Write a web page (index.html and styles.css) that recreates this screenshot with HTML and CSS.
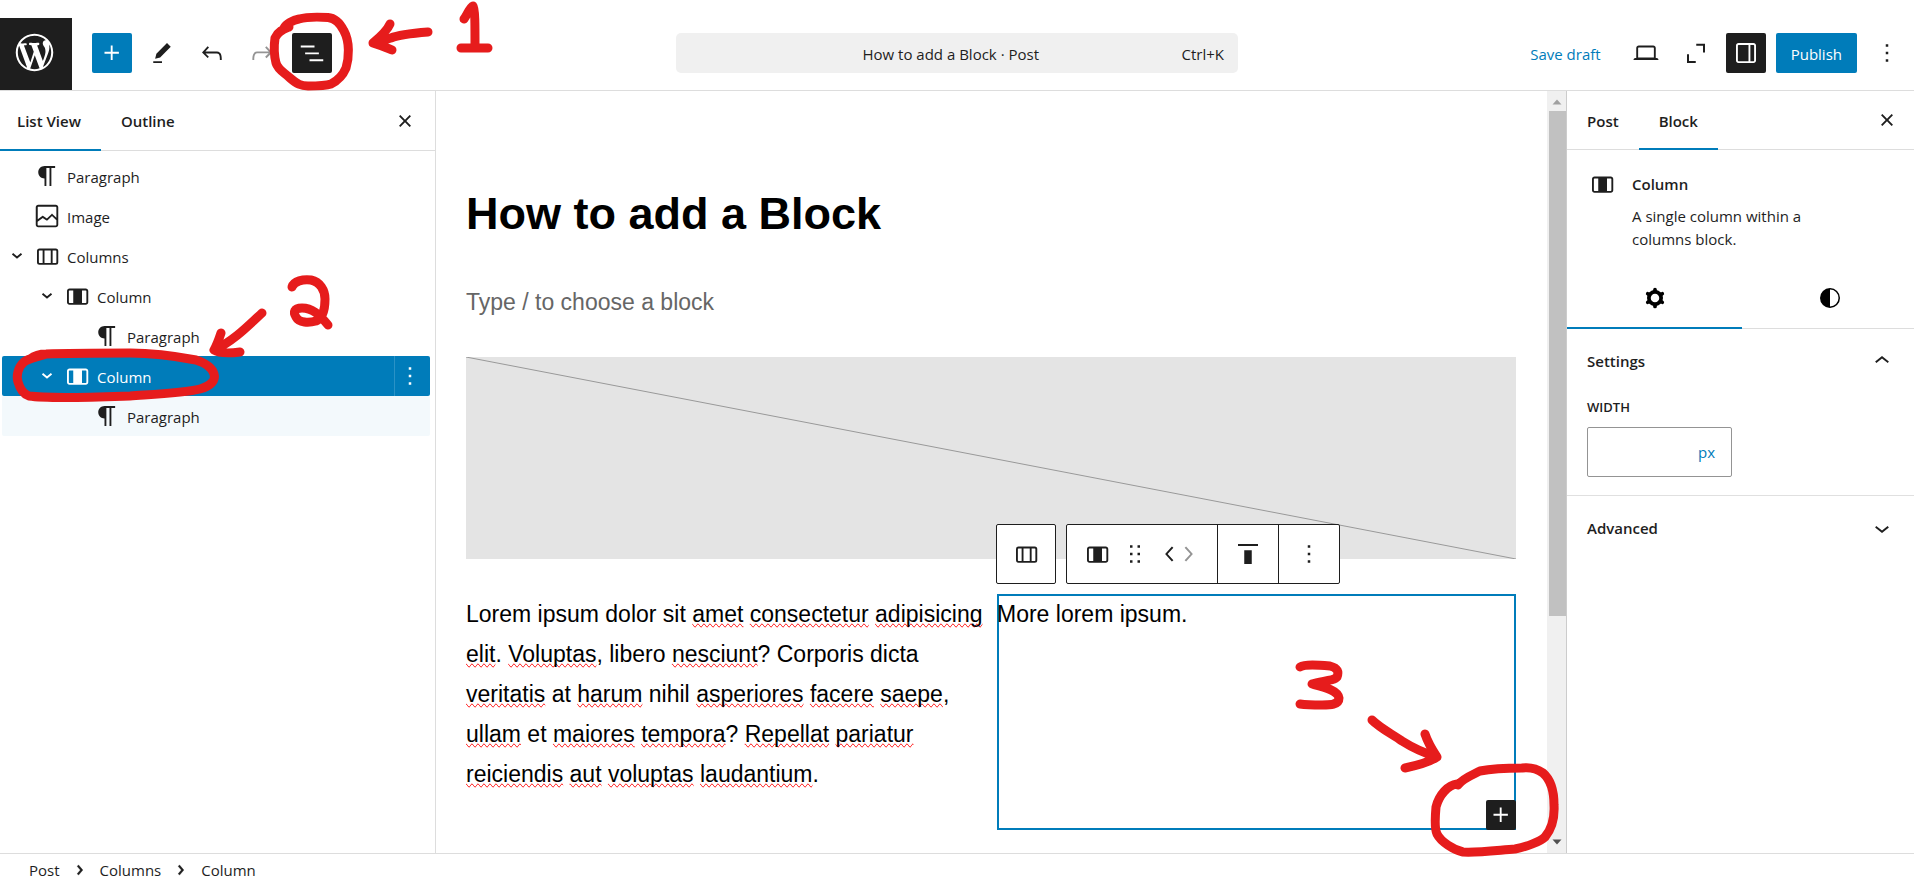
FILE: index.html
```html
<!DOCTYPE html>
<html lang="en">
<head>
<meta charset="utf-8">
<title>How to add a Block</title>
<link rel="stylesheet" href="styles.css">
</head>
<body>
<svg class="sprite" aria-hidden="true">
  <symbol id="i-plus" viewBox="0 0 24 24"><path d="M11 12.5V17.5H12.5V12.5H17.5V11H12.5V6H11V11H6V12.5H11Z"/></symbol>
  <symbol id="i-more" viewBox="0 0 24 24"><path d="M13 19h-2v-2h2v2zm0-6h-2v-2h2v2zm0-6h-2V5h2v2z"/></symbol>
  <symbol id="i-close" viewBox="0 0 24 24"><path d="M12 13.06l3.712 3.713 1.061-1.06L13.061 12l3.712-3.712-1.06-1.06L12 10.938 8.288 7.227l-1.061 1.06L10.939 12l-3.712 3.712 1.06 1.061L12 13.061z"/></symbol>
  <symbol id="i-para" viewBox="0 0 24 24"><path d="m9.99609 14v-.2251l.00391.0001v6.225h1.5v-14.5h2.5v14.5h1.5v-14.5h3v-1.5h-8.50391c-2.76142 0-5 2.23858-5 5 0 2.7614 2.23858 5 5 5z"/></symbol>
  <symbol id="i-image" viewBox="0 0 24 24"><path d="M19 3H5c-1.1 0-2 .9-2 2v14c0 1.1.9 2 2 2h14c1.1 0 2-.9 2-2V5c0-1.1-.9-2-2-2zM5 4.5h14c.3 0 .5.2.5.5v8.4l-3-2.9c-.3-.3-.8-.3-1 0L11.9 14 9 12c-.3-.2-.6-.2-.8 0l-3.6 2.6V5c-.1-.3.1-.5.4-.5zm14 15H5c-.3 0-.5-.2-.5-.5v-2.4l4.1-3 3 1.9c.3.2.7.2.9-.1L16 12l3.5 3.4V19c0 .3-.2.5-.5.5z"/></symbol>
  <symbol id="i-columns" viewBox="0 0 24 24"><path fill-rule="evenodd" d="M15 7.5h-5v10h5v-10Zm1.5 0v10H19a.5.5 0 0 0 .5-.5V8a.5.5 0 0 0-.5-.5h-2.5ZM6 7.5h2.5v10H6a.5.5 0 0 1-.5-.5V8a.5.5 0 0 1 .5-.5ZM6 6h13a2 2 0 0 1 2 2v9a2 2 0 0 1-2 2H6a2 2 0 0 1-2-2V8a2 2 0 0 1 2-2Z"/></symbol>
  <symbol id="i-column" viewBox="0 0 24 24"><path d="M19 6H6c-1.1 0-2 .9-2 2v9c0 1.1.9 2 2 2h13c1.1 0 2-.9 2-2V8c0-1.1-.9-2-2-2zM6 17.5c-.3 0-.5-.2-.5-.5V8c0-.3.2-.5.5-.5h3v10H6zm13.5-.5c0 .3-.2.5-.5.5h-3v-10h3c.3 0 .5.2.5.5v9z"/></symbol>
  <symbol id="i-caret" viewBox="0 0 24 24"><path fill="none" stroke="currentColor" stroke-width="1.5" d="M8.4 10.2 12 13.200l3.600-3"/></symbol>
  <symbol id="i-crumb" viewBox="0 0 24 24"><path d="M10.8622 8.04053L14.2805 12.0286L10.8622 16.0167L9.72327 15.0405L12.3049 12.0286L9.72327 9.01672L10.8622 8.04053Z" stroke="currentColor" stroke-width=".3"/></symbol>
</svg>

<header class="topbar">
  <a class="logo" href="#" aria-label="View Posts">
    <svg viewBox="-2 -2 24 24"><path d="M20 10c0-5.51-4.49-10-10-10C4.48 0 0 4.49 0 10c0 5.52 4.48 10 10 10 5.51 0 10-4.48 10-10zM7.78 15.37L4.37 6.22c.55-.02 1.17-.08 1.17-.08.5-.06.44-1.13-.06-1.11 0 0-1.45.11-2.37.11-.18 0-.37 0-.58-.01C4.12 2.69 6.87 1.11 10 1.11c2.33 0 4.45.87 6.05 2.34-.68-.11-1.65.39-1.65 1.58 0 .74.45 1.36.9 2.1.35.61.55 1.36.55 2.46 0 1.49-1.4 5-1.4 5l-3.03-8.37c.54-.02.82-.17.82-.17.5-.05.44-1.25-.06-1.22 0 0-1.44.12-2.38.12-.87 0-2.33-.12-2.33-.12-.5-.03-.56 1.2-.06 1.22l.92.08 1.26 3.41zM17.41 10c.24-.64.74-1.87.43-4.25.7 1.29 1.05 2.71 1.05 4.25 0 3.29-1.73 6.24-4.4 7.78.97-2.59 1.94-5.2 2.92-7.78zM6.1 18.09C3.12 16.65 1.11 13.53 1.11 10c0-1.3.23-2.48.72-3.59C3.25 10.3 4.67 14.2 6.1 18.09zm4.03-6.63l2.58 6.98c-.86.29-1.76.45-2.71.45-.79 0-1.57-.11-2.29-.33.81-2.38 1.62-4.74 2.42-7.1z"/></svg>
  </a>
  <div class="tools tools-left">
    <button class="btn primary" aria-label="Add block"><svg class="icon"><use href="#i-plus"/></svg></button>
    <button class="btn" aria-label="Tools"><svg class="icon" viewBox="0 0 24 24"><path d="m19 7-3-3-8.5 8.5-1 4 4-1L19 7Zm-7 11.5H5V20h7v-1.5Z"/></svg></button>
    <button class="btn" aria-label="Undo"><svg class="icon" viewBox="0 0 24 24"><path d="M18.3 11.7c-.6-.6-1.4-.9-2.3-.9H6.7l2.9-3.3-1.1-1-4.5 5L8.5 16l1-1-2.7-2.7H16c.5 0 .9.2 1.3.5 1 1 1 3.4 1 4.5v.3h1.5v-.2c0-1.5 0-4.3-1.5-5.7z"/></svg></button>
    <button class="btn muted" aria-label="Redo"><svg class="icon" viewBox="0 0 24 24"><path d="M15.6 6.5l-1.1 1 2.9 3.3H8c-.9 0-1.7.3-2.3.9-1.4 1.5-1.4 4.2-1.4 5.6v.2h1.5v-.3c0-1.1 0-3.5 1-4.5.3-.3.7-.5 1.3-.5h9.2L14.5 15l1.1 1.1 4.6-4.6-4.6-5z"/></svg></button>
    <button class="btn pressed" aria-label="Document Overview"><svg class="icon" viewBox="0 0 24 24"><path d="M3 6h11v1.500H3V6Zm3.500 5.500h11V13h-11v-1.500ZM21 17H10v1.500h11V17Z"/></svg></button>
  </div>
  <button class="command"><span class="command-title">How to add a Block · Post</span><span class="command-key">Ctrl+K</span></button>
  <div class="tools tools-right">
    <button class="btn link">Save draft</button>
    <button class="btn" aria-label="View"><svg class="icon" viewBox="0 0 24 24"><path d="M20.500 16h-.7V8c0-1.100-.9-2-2-2H6.200c-1.100 0-2 .9-2 2v8h-.7c-.8 0-1.500.7-1.500 1.500h20c0-.8-.7-1.500-1.500-1.500zM5.700 8c0-.3.2-.5.5-.5h11.600c.3 0 .5.2.5.5v7.600H5.700V8z"/></svg></button>
    <button class="btn" aria-label="Fullscreen"><svg class="icon" viewBox="0 0 24 24"><path d="M12.200 4.500h7V11.500h-1.600V6.100h-5.400zM4.800 13h1.600v5.400h5.400V20h-7z"/></svg></button>
    <button class="btn pressed" aria-label="Settings"><svg class="icon" viewBox="0 0 24 24"><path d="M18 4H6c-1.100 0-2 .9-2 2v12c0 1.100.9 2 2 2h12c1.100 0 2-.9 2-2V6c0-1.100-.9-2-2-2zm-4 14.500H6c-.3 0-.5-.2-.5-.5V6c0-.3.2-.5.5-.5h8v13zm4.500-.5c0 .3-.2.5-.5.5h-2.500v-13H18c.3 0 .5.2.5.5v12z"/></svg></button>
    <button class="btn primary publish">Publish</button>
    <button class="btn" aria-label="Options"><svg class="icon"><use href="#i-more"/></svg></button>
  </div>
</header>

<div class="workspace">
  <aside class="overview">
    <div class="tabs">
      <button class="tab active">List View</button>
      <button class="tab">Outline</button>
      <button class="close" aria-label="Close"><svg class="icon"><use href="#i-close"/></svg></button>
    </div>
    <ul class="tree">
      <li class="row"><span class="caret"></span><svg class="icon"><use href="#i-para"/></svg><a href="#">Paragraph</a></li>
      <li class="row"><span class="caret"></span><svg class="icon"><use href="#i-image"/></svg><a href="#">Image</a></li>
      <li class="row"><svg class="icon caret"><use href="#i-caret"/></svg><svg class="icon"><use href="#i-columns"/></svg><a href="#">Columns</a></li>
      <li class="row depth-1"><svg class="icon caret"><use href="#i-caret"/></svg><svg class="icon"><use href="#i-column"/></svg><a href="#">Column</a></li>
      <li class="row depth-2"><span class="caret"></span><svg class="icon"><use href="#i-para"/></svg><a href="#">Paragraph</a></li>
      <li class="row depth-1 selected"><svg class="icon caret"><use href="#i-caret"/></svg><svg class="icon"><use href="#i-column"/></svg><a href="#">Column</a><button class="row-menu" aria-label="Options"><svg class="icon"><use href="#i-more"/></svg></button></li>
      <li class="row depth-2 branch"><span class="caret"></span><svg class="icon"><use href="#i-para"/></svg><a href="#">Paragraph</a></li>
    </ul>
  </aside>

  <main class="canvas">
    <div class="document">
      <h1>How to add a Block</h1>
      <p class="prompt">Type / to choose a block</p>
      <svg class="placeholder" viewBox="0 0 100 100" preserveAspectRatio="none" role="img" aria-label="Image placeholder"><path d="M0 0 100 100" vector-effect="non-scaling-stroke"/></svg>
      <div class="columns">
        <p class="column">Lorem ipsum dolor sit <u>amet</u> <u>consectetur</u> <u>adipisicing</u> <u>elit</u>. <u>Voluptas</u>, libero <u>nesciunt</u>? Corporis dicta <u>veritatis</u> at <u>harum</u> nihil <u>asperiores</u> <u>facere</u> <u>saepe</u>, <u>ullam</u> et <u>maiores</u> <u>tempora</u>? <u>Repellat</u> <u>pariatur</u> <u>reiciendis</u> <u>aut</u> <u>voluptas</u> <u>laudantium</u>.</p>
        <div class="column current">
          <p>More lorem ipsum.</p>
          <div class="block-toolbar">
            <div class="group"><button aria-label="Select parent block"><svg class="icon"><use href="#i-columns"/></svg></button></div>
            <div class="group">
              <div class="segment">
                <button aria-label="Column"><svg class="icon"><use href="#i-column"/></svg></button>
                <button aria-label="Drag"><svg class="icon" viewBox="0 0 24 24"><path d="M8 7h2V5H8v2zm0 6h2v-2H8v2zm0 6h2v-2H8v2zm6-14v2h2V5h-2zm0 8h2v-2h-2v2zm0 6h2v-2h-2v2z"/></svg></button>
                <div class="movers">
                  <button aria-label="Move left"><svg class="icon mover" viewBox="4 0 15 24"><path d="M14.600 7l-1.200-1L8 12l5.400 6 1.200-1-4.600-5z"/></svg></button>
                  <button class="muted" aria-label="Move right"><svg class="icon mover" viewBox="5 0 15 24"><path d="M10.600 6L9.400 7l4.600 5-4.600 5 1.200 1 5.400-6z"/></svg></button>
                </div>
              </div>
              <button class="segment" aria-label="Align top"><svg class="icon" viewBox="0 0 24 24"><path d="M9 20h6V9H9v11zM4 4v1.500h16V4H4z"/></svg></button>
              <button class="segment" aria-label="Options"><svg class="icon"><use href="#i-more"/></svg></button>
            </div>
          </div>
          <button class="appender" aria-label="Add block"><svg class="icon"><use href="#i-plus"/></svg></button>
        </div>
      </div>
    </div>
    <div class="scrollbar" aria-hidden="true">
      <svg class="arrow up" viewBox="0 0 18 20"><path d="M4.500 13.500 9 8.500l4.500 5z"/></svg>
      <div class="thumb"></div>
      <svg class="arrow down" viewBox="0 0 18 20"><path d="M4.500 6.500h9L9 11.500z"/></svg>
    </div>
  </main>

  <aside class="inspector">
    <div class="tabs">
      <button class="tab">Post</button>
      <button class="tab active">Block</button>
      <button class="close" aria-label="Close Settings"><svg class="icon"><use href="#i-close"/></svg></button>
    </div>
    <section class="card">
      <svg class="icon"><use href="#i-column"/></svg>
      <div><h2>Column</h2><p>A single column within a columns block.</p></div>
    </section>
    <div class="modes">
      <button class="mode active" aria-label="Settings"><svg class="icon cog" viewBox="0 0 24 24"><circle cx="12" cy="12" r="4.900"/><path d="M12 6.500V5.300M12 17.500v1.200M16.800 9.200l1-.6M7.200 14.800l-1 .6M7.200 9.200l-1-.6M16.800 14.800l1 .6"/></svg></button>
      <button class="mode" aria-label="Styles"><svg class="icon" viewBox="0 0 24 24"><path d="M12 4a8 8 0 100 16 8 8 0 000-16zm0 1.200a6.800 6.800 0 010 13.600z"/></svg></button>
    </div>
    <section class="panel">
      <button class="panel-title">Settings<svg class="icon" viewBox="0 0 24 24"><path d="M6.500 12.400L12 8l5.500 4.400-.9 1.200L12 10l-4.500 3.600-1-1.200z"/></svg></button>
      <div class="field">
        <label for="width">Width</label>
        <div class="unit-input"><input id="width" type="text"><select aria-label="Unit"><option>px</option></select></div>
      </div>
    </section>
    <section class="panel">
      <button class="panel-title">Advanced<svg class="icon" viewBox="0 0 24 24"><path d="M17.500 11.600L12 16l-5.500-4.400.9-1.200L12 14l4.500-3.600 1 1.200z"/></svg></button>
    </section>
  </aside>
</div>

<footer class="crumbs">
  <a href="#">Post</a><svg class="icon"><use href="#i-crumb"/></svg><a href="#">Columns</a><svg class="icon"><use href="#i-crumb"/></svg><a href="#">Column</a>
</footer>

<svg class="marks" viewBox="0 0 1914 880" role="img" aria-label="Steps 1, 2 and 3 marked in red pen">
  <path d="M289 27C284 29 278 31 275 38C274 45 274 55 276 63C278 70 285 73 290 78C297 84 301 86 308 86C316 86 325 86 331 84C337 81 343 75 346 68C349 58 350 42 344 31C340 23 335 18 328 17.500C320 17 306 17 299 19C293 20 286 24 284 28"/>
  <path d="M428 32C415 33 398 35 391 38C384 40 378 42 373 43M390 24C387 31 379 38 373 43C379 45 388 48 392 50"/>
  <path d="M464 19C467 15 470 7 473 6C475 8 475 25 475 48M461 48H488"/>
  <path d="M46 354C38 357 29 358 24 362C18 367 16 376 18 382C20 389 23 394 29 396C50 399 100 397 130 396C160 394 185 393 200 389C211 386 216 380 214 374C212 367 205 363 196 360C175 356 155 353 130 353C100 353 70 353 46 354C39 354 34 356 30 359"/>
  <path d="M262 313C251 323 234 341 214 350M221 333C219 339 217 345 214 350C220 354 232 353 240 352"/>
  <path d="M292 287C294 281 303 279 311 280C320 282 325 290 325 299C325 308 323 318 316 321C309 323 299 323 296 317C293 312 294 308 302 308C312 308 319 314 328 325"/>
  <path d="M1300 667C1305 664 1318 665 1330 666C1338 668 1339 672 1337 677C1334 681 1320 681 1312 684C1324 687 1338 690 1339 698C1339 705 1330 705 1322 705C1315 705 1307 705 1300 704"/>
  <path d="M1372 720C1380 728 1392 734 1402 741C1413 748 1424 753 1437 757M1425 734C1428 743 1433 751 1437 757C1431 761 1419 765 1405 768"/>
  <path d="M1457 784C1448 785 1439 795 1436 807C1435 818 1435 830 1437 834C1441 842 1454 850 1463 852C1477 853 1500 850 1515 849C1525 847 1540 842 1545 837C1550 831 1555 822 1554 805C1554 793 1551 780 1543 773C1536 768 1529 767 1522 768C1510 768 1490 769 1480 771C1472 775 1462 779 1458 785"/>
</svg>
</body>
</html>
```
FILE: styles.css
```css
* { box-sizing: border-box; }

:root {
  --accent: #007cba;
  --ink: #1e1e1e;
  --line: #ddd;
}

body {
  margin: 0;
  height: 100vh;
  display: flex;
  flex-direction: column;
  position: relative;
  overflow: hidden;
  background: #fff;
  color: var(--ink);
  font: 15px/24px "Open Sans", "Noto Sans", sans-serif;
}

button, input, select { font: inherit; color: inherit; }

button {
  display: flex;
  align-items: center;
  justify-content: center;
  padding: 0;
  border: 0;
  background: none;
}

a { color: inherit; text-decoration: none; }
h1, h2, p, ul { margin: 0; padding: 0; }

.sprite { display: none; }
.icon { width: 30px; height: 30px; flex: none; fill: currentColor; }

/* Top bar */
.topbar {
  flex: none;
  display: flex;
  align-items: center;
  margin-top: 18px;
  height: 73px;
  border-bottom: 1px solid var(--line);
  padding-right: 7px;
}
.logo {
  align-self: stretch;
  width: 72px;
  padding: 12px;
  background: var(--ink);
  color: #fff;
}
.logo svg { width: 45px; height: 45px; fill: currentColor; }
.tools { display: flex; gap: 10px; flex: 1 1 0; padding-bottom: 2px; }
.tools-left { padding-left: 20px; }
.tools-right { justify-content: flex-end; }
.btn { width: 40px; height: 40px; border-radius: 2px; flex: none; }
.primary { background: var(--accent); color: #fff; }
.pressed { background: var(--ink); color: #fff; }
.muted { color: #949494; }
.link { width: auto; padding: 2px 15px 0; color: var(--accent); }
.publish { width: auto; padding: 2px 15px 0; font-weight: 500; }
.command {
  width: 562px;
  height: 40px;
  margin: 0 85px 2px 0;
  padding: 2px 14px 0 44px;
  border-radius: 5px;
  background: #f0f0f0;
}
.command-title { flex: 1; }

/* Shared tab strip */
.tabs {
  display: flex;
  height: 60px;
  border-bottom: 1px solid var(--line);
}
.tab { padding: 2px 20px 0; height: 60px; font-weight: 600; border-bottom: 2px solid transparent; }
.tab.active { border-bottom-color: var(--accent); }
.close { margin-left: auto; width: 30px; }

.workspace { flex: 1; display: flex; min-height: 0; }

/* List view */
.overview { width: 436px; flex: none; border-right: 1px solid var(--line); }
.overview .tab:first-child { padding-left: 17px; }
.overview .close { margin-right: 15px; }
.tree { list-style: none; padding: 5px 5px 0 2px; }
.row { display: flex; align-items: center; height: 40px; border-radius: 2px; }
.row .caret { width: 30px; }
.row a { flex: 1; padding: 2px 0 0 5px; }
.depth-1 { padding-left: 30px; }
.depth-2 { padding-left: 60px; }
.selected { background: var(--accent); color: #fff; }
.branch { background: #f3f9fc; }
.row-menu { justify-content: flex-start; width: 36px; height: 40px; border-left: 1px solid #2a92c6; }

/* Editor canvas */
.canvas {
  flex: 1;
  display: flex;
  min-width: 0;
  color: #000;
  font-family: "Liberation Sans", Arial, sans-serif;
  font-size: 23px;
  line-height: 40px;
}
.document { flex: 1; min-width: 0; padding: 90px 31px 0 30px; }
h1 { font-size: 45px; line-height: 66px; }
.prompt { margin-top: 35px; color: #666; }
.placeholder {
  display: block;
  width: 100%;
  height: 202px;
  margin-top: 35px;
  background: #e4e4e4;
  fill: none;
  stroke: #999;
}
.columns {
  display: grid;
  grid-template-columns: 1fr 1fr;
  gap: 12px;
  margin-top: 35px;
}
u { text-decoration: spelling-error; }
.current { position: relative; height: 236px; box-shadow: inset 0 0 0 2px var(--accent); }
.block-toolbar { position: absolute; left: -1px; bottom: 100%; margin-bottom: 10px; display: flex; gap: 10px; color: var(--ink); }
.group { display: flex; height: 60px; background: #fff; border: 1px solid var(--ink); border-radius: 2px; }
.group > button { width: 58px; }
.segment { display: flex; align-items: center; }
.segment:first-child { padding: 0 19px 0 15px; gap: 8px; }
.segment + .segment { width: 61px; border-left: 1px solid var(--ink); }
.movers { display: flex; padding-left: 2px; }
.mover { width: 19px; }
.appender {
  position: absolute;
  right: 0;
  bottom: 0;
  width: 30px;
  height: 30px;
  border-radius: 2px;
  background: var(--ink);
  color: #fff;
}

.scrollbar { width: 19px; flex: none; display: flex; flex-direction: column; background: #f0f0f0; }
.arrow { width: 18px; height: 20px; margin-left: 1px; fill: #a0a0a0; }
.arrow.down { margin-top: auto; fill: #505050; }
.thumb { height: 505px; margin-left: 2px; background: #c1c1c1; }

/* Inspector */
.inspector { width: 348px; flex: none; border-left: 1px solid #ccc; }
.inspector .tabs { height: 59px; }
.inspector .tab { height: 59px; }
.inspector .close { margin-right: 12px; }
.card { display: flex; gap: 15px; padding: 19px 60px 0 20px; }
h2 { font-size: 15px; line-height: 30px; font-weight: 600; }
.card p { margin-top: 6px; line-height: 23px; }
.modes { display: flex; height: 60px; margin-top: 18px; border-bottom: 1px solid var(--line); color: #000; }
.mode { flex: 1 0 175px; height: 60px; border-bottom: 2px solid transparent; }
.mode.active { border-bottom-color: var(--accent); }
.cog { fill: none; stroke: currentColor; stroke-width: 3; stroke-linecap: round; }
.panel { padding: 0 17px 0 20px; }
.panel + .panel { border-top: 1px solid #e0e0e0; }
.panel-title { width: 100%; height: 63px; justify-content: space-between; font-weight: 600; }
.field { display: flex; flex-direction: column; gap: 8px; padding: 3px 0 18px; }
.field label { font-size: 13px; line-height: 24px; font-weight: 600; text-transform: uppercase; }
.unit-input { display: flex; width: 145px; height: 50px; border: 1px solid #949494; border-radius: 2px; }
.unit-input input { flex: 1; min-width: 0; padding: 0 10px; border: 0; background: none; }
.unit-input select { width: 33px; border: 0; background: none; appearance: none; color: var(--accent); padding: 0; }

/* Breadcrumb */
.crumbs { flex: none; display: flex; align-items: center; gap: 5px; height: 27px; padding: 6px 29px 0; border-top: 1px solid var(--line); }

/* Pen marks over the editor */
.marks {
  position: absolute;
  left: 0;
  top: 0;
  width: 1914px;
  height: 880px;
  pointer-events: none;
  fill: none;
  stroke: #e61c1c;
  stroke-width: 9;
  stroke-linecap: round;
  stroke-linejoin: round;
}
```
